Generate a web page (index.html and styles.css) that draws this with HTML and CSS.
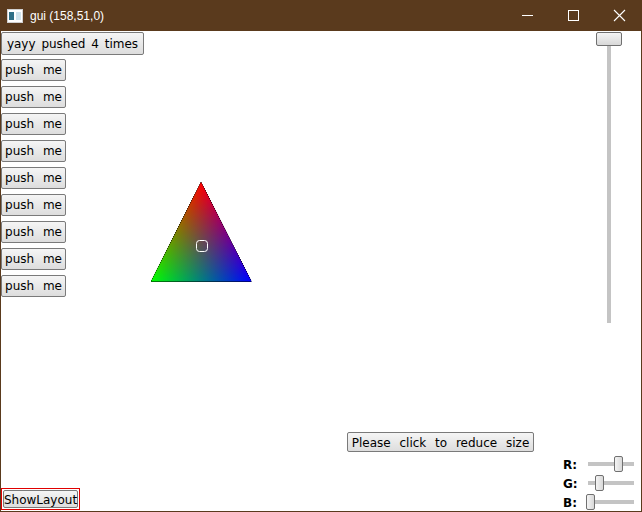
FILE: index.html
```html
<!DOCTYPE html>
<html>
<head>
<meta charset="utf-8">
<link rel="stylesheet" href="styles.css">
</head>
<body>
<div class="window">
  <div class="titlebar">
    <svg class="app-icon" width="16" height="14" viewBox="0 0 16 14">
      <rect x="0.5" y="0.5" width="15" height="13" fill="#ffffff" stroke="#d0d0d0"/>
      <rect x="2" y="3" width="5" height="8" fill="#2f6f86"/>
      <rect x="9" y="3" width="5" height="8" fill="#cfe3ec"/>
    </svg>
    <span class="title">gui (158,51,0)</span>
    <div class="controls">
      <svg class="ctl" width="46" height="31" viewBox="0 0 46 31"><line x1="18" y1="15.5" x2="29" y2="15.5" stroke="#fff" stroke-width="1"/></svg>
      <svg class="ctl" width="46" height="31" viewBox="0 0 46 31"><rect x="18.5" y="10.5" width="10" height="10" fill="none" stroke="#fff" stroke-width="1"/></svg>
      <svg class="ctl" width="46" height="31" viewBox="0 0 46 31"><path d="M18 10 L29 21 M29 10 L18 21" stroke="#fff" stroke-width="1.1"/></svg>
    </div>
  </div>
  <div class="content">
    <div class="top">
      <div class="buttons">
        <div class="btn btn-yay">yayy pushed 4 times</div>
        <div class="btn btn-push">push me</div>
        <div class="btn btn-push">push me</div>
        <div class="btn btn-push">push me</div>
        <div class="btn btn-push">push me</div>
        <div class="btn btn-push">push me</div>
        <div class="btn btn-push">push me</div>
        <div class="btn btn-push">push me</div>
        <div class="btn btn-push">push me</div>
        <div class="btn btn-push">push me</div>
      </div>
      <svg class="triangle" width="102" height="102" viewBox="150 181 102 102">
        <defs>
          <linearGradient id="gr" gradientUnits="userSpaceOnUse" x1="201" y1="182" x2="201" y2="281">
            <stop offset="0" stop-color="#ff0000"/>
            <stop offset="1" stop-color="#000000"/>
          </linearGradient>
          <linearGradient id="gg" gradientUnits="userSpaceOnUse" x1="151" y1="281" x2="230.7" y2="240.8">
            <stop offset="0" stop-color="#00ff00"/>
            <stop offset="1" stop-color="#000000"/>
          </linearGradient>
          <linearGradient id="gb" gradientUnits="userSpaceOnUse" x1="251" y1="281" x2="171.3" y2="240.8">
            <stop offset="0" stop-color="#0000ff"/>
            <stop offset="1" stop-color="#000000"/>
          </linearGradient>
        </defs>
        <g class="tri-group">
          <polygon points="201,182 151,281.5 251.5,281.5" fill="url(#gr)"/>
          <polygon class="add" points="201,182 151,281.5 251.5,281.5" fill="url(#gg)"/>
          <polygon class="add" points="201,182 151,281.5 251.5,281.5" fill="url(#gb)"/>
        </g>
        <rect x="196.5" y="240.5" width="11" height="11" rx="3" fill="none" stroke="#ffffff" stroke-width="1"/>
      </svg>
      <div class="vslider">
        <div class="vhandle"></div>
        <div class="vtrack"></div>
      </div>
    </div>
    <div class="bottom">
      <div class="layout-frame"><div class="btn btn-layout">ShowLayout</div></div>
      <div class="btn btn-reduce">Please click to reduce size</div>
      <div class="rgb">
        <div class="rgb-row"><span class="lbl">R:</span><div class="htrack"><div class="hhandle" style="left:26px"></div></div></div>
        <div class="rgb-row"><span class="lbl">G:</span><div class="htrack"><div class="hhandle" style="left:7px"></div></div></div>
        <div class="rgb-row"><span class="lbl">B:</span><div class="htrack"><div class="hhandle" style="left:-2px"></div></div></div>
      </div>
    </div>
  </div>
</div>
</body>
</html>
```

FILE: styles.css
```css
* { box-sizing: border-box; }
html, body { margin: 0; padding: 0; background: #ffffff; }
body { width: 642px; height: 512px; overflow: hidden; font-family: "DejaVu Sans", Verdana, sans-serif; font-size: 12px; color: #000; }

.window { width: 642px; height: 512px; display: flex; flex-direction: column; }

.titlebar {
  height: 31px;
  background: #5a3a1d;
  display: flex;
  align-items: center;
  color: #ffffff;
  flex: none;
}
.app-icon { margin-left: 7px; margin-top: 1px; }
.title { margin-left: 7px; font-family: "Liberation Sans", Arial, sans-serif; font-size: 12px; margin-top: 1px; }
.controls { margin-left: auto; display: flex; }
.ctl { display: block; }

.content {
  flex: 1;
  border: 1px solid #5a3a1d;
  border-top: 0;
  display: flex;
  flex-direction: column;
}

.top { display: flex; align-items: flex-start; height: 401px; flex: none; }

.buttons { display: flex; flex-direction: column; align-items: flex-start; }

.btn {
  border: 1px solid #7a7a7a;
  border-radius: 2px;
  background: linear-gradient(#f5f5f5, #dddddd);
  display: flex;
  align-items: center;
  justify-content: center;
  white-space: nowrap;
  word-spacing: 5px;
  line-height: 1;
  padding-top: 1px;
}
.btn-yay { width: 143px; height: 23px; margin-top: 1px; word-spacing: 2px; }
.btn-push { width: 65px; height: 22px; margin-top: 4px; padding-top: 0; }
.btn-yay + .btn-push { margin-top: 4px; }
.btn-push + .btn-push { margin-top: 5px; }

.triangle { display: block; margin-left: 6px; margin-top: 150px; }
.tri-group { isolation: isolate; }
.add { mix-blend-mode: plus-lighter; }

.vslider { margin-left: auto; margin-right: 19px; width: 26px; display: flex; flex-direction: column; align-items: center; }
.vhandle {
  width: 26px; height: 14px; margin-top: 1px;
  border: 1px solid #707070; border-radius: 2px;
  background: linear-gradient(#f4f4f4, #d8d8d8);
}
.vtrack { width: 4px; height: 277px; background: #c4c4c4; }

.bottom { display: flex; align-items: flex-end; flex: 1; }

.layout-frame { border: 1px solid #e00000; padding: 1px; margin-bottom: 1px; }
.btn-layout { width: 75px; height: 18px; word-spacing: 0; }

.btn-reduce { align-self: flex-start; width: 187px; height: 20px; margin-left: 267px; }

.rgb { margin-left: 29px; width: 71px; display: flex; flex-direction: column; margin-bottom: 0; }
.rgb-row { height: 19px; display: flex; align-items: center; }
.lbl { width: 25px; font-weight: bold; font-size: 12px; padding-top: 2px; }
.htrack { position: relative; width: 46px; height: 4px; background: #c4c4c4; }
.hhandle {
  position: absolute; top: -6px; width: 9px; height: 16px;
  border: 1px solid #707070; border-radius: 2px;
  background: linear-gradient(90deg, #f4f4f4, #d8d8d8);
}
```
